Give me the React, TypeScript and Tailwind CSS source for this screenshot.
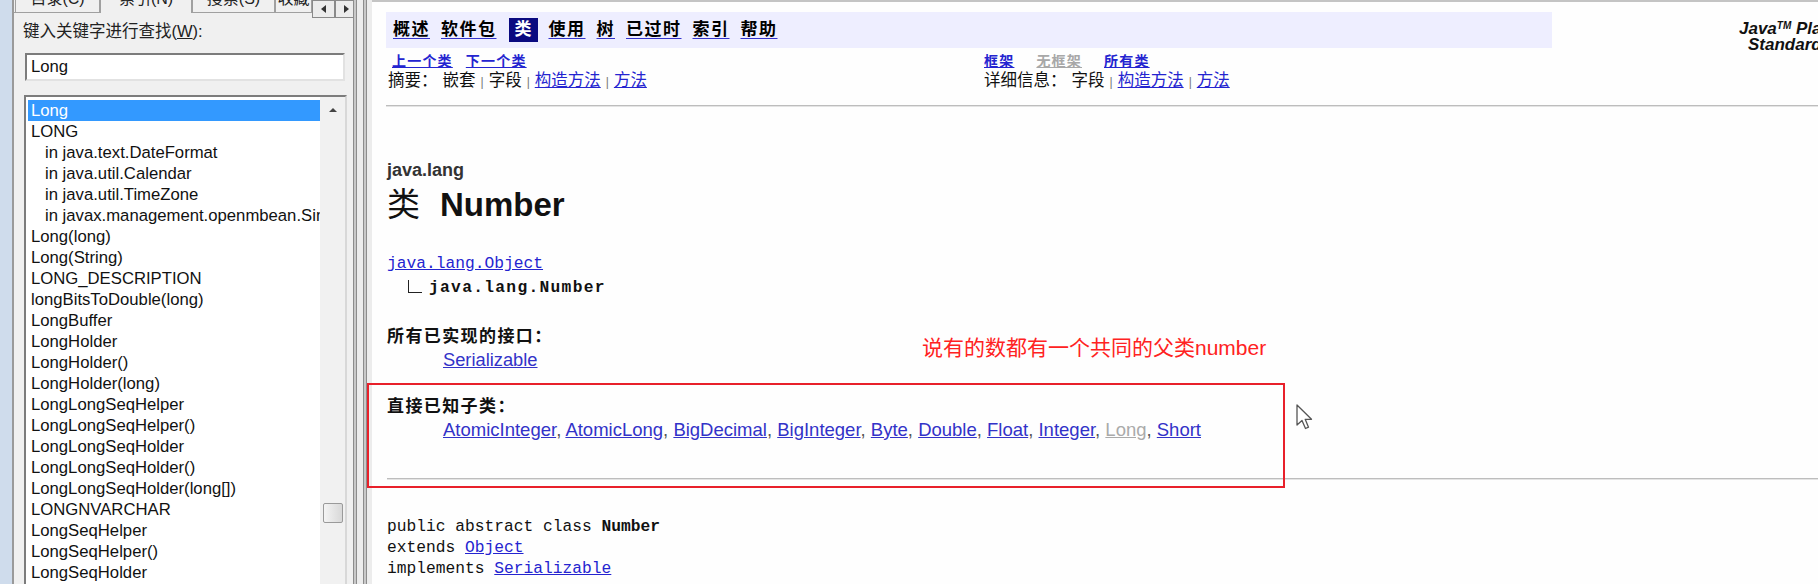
import React from 'react';

const sans = "font-['Liberation_Sans','Noto_Sans_CJK_SC',sans-serif]";
const mono = "font-['Liberation_Mono','DejaVu_Sans_Mono','Noto_Sans_CJK_SC',monospace]";

const listItems: { text: string; indent?: boolean }[] = [
  { text: 'Long' },
  { text: 'LONG' },
  { text: 'in java.text.DateFormat', indent: true },
  { text: 'in java.util.Calendar', indent: true },
  { text: 'in java.util.TimeZone', indent: true },
  { text: 'in javax.management.openmbean.SimpleType', indent: true },
  { text: 'Long(long)' },
  { text: 'Long(String)' },
  { text: 'LONG_DESCRIPTION' },
  { text: 'longBitsToDouble(long)' },
  { text: 'LongBuffer' },
  { text: 'LongHolder' },
  { text: 'LongHolder()' },
  { text: 'LongHolder(long)' },
  { text: 'LongLongSeqHelper' },
  { text: 'LongLongSeqHelper()' },
  { text: 'LongLongSeqHolder' },
  { text: 'LongLongSeqHolder()' },
  { text: 'LongLongSeqHolder(long[])' },
  { text: 'LONGNVARCHAR' },
  { text: 'LongSeqHelper' },
  { text: 'LongSeqHelper()' },
  { text: 'LongSeqHolder' },
];

const navItems = ['概述', '软件包', '类', '使用', '树', '已过时', '索引', '帮助'];

const subclasses = ['AtomicInteger', 'AtomicLong', 'BigDecimal', 'BigInteger', 'Byte', 'Double', 'Float', 'Integer', 'Long', 'Short'];

const Sep = () => <span className="mx-[5px] text-[12px] text-[#777]">|</span>;

const Tab = ({ label, width, selected }: { label: string; width: number; selected?: boolean }) => (
  <div
    style={{ width }}
    className={`h-[13px] shrink-0 overflow-hidden border-x border-[#a0a0a0] bg-[#f0f0f0] ${selected ? '' : 'border-b'}`}
  >
    <div className="-mt-[11px] text-center text-[16px] leading-[20px] text-[#222]">{label}</div>
  </div>
);

const LeftPanel = () => (
  <div className={`flex w-[341px] shrink-0 flex-col border-l-2 border-[#9a9a9a] bg-[#f0f0f0] ${sans}`}>
    {/* tab strip, mostly scrolled out of view */}
    <div className="flex h-[13px] items-start">
      <div className="h-[13px] w-[1px] shrink-0 border-b border-[#a0a0a0]" />
      <Tab label="目录(C)" width={85} />
      <Tab label="索引(N)" width={92} selected />
      <Tab label="搜索(S)" width={83} />
      <Tab label="收藏(I)" width={37} />
      <div className="flex h-[18px] w-[23px] shrink-0 items-center justify-center border border-[#8a8a8a] bg-[#ececec]">
        <div className="h-0 w-0 border-y-[4px] border-r-[5px] border-y-transparent border-r-[#333]" />
      </div>
      <div className="flex h-[18px] w-[23px] shrink-0 items-center justify-center border border-[#8a8a8a] bg-[#ececec]">
        <div className="h-0 w-0 border-y-[4px] border-l-[5px] border-y-transparent border-l-[#333]" />
      </div>
    </div>

    <div className="ml-[9px] mt-[8px] text-[16.5px] leading-[20px] text-[#222]">
      键入关键字进行查找(<span className="underline">W</span>):
    </div>

    <div className="ml-[11px] mt-[12px] flex h-[28px] w-[320px] items-center border-2 border-[#7c7c7c] border-b-[#e2e2e2] border-r-[#e2e2e2] bg-white pl-[4px] text-[16.7px] text-[#111]">
      Long
    </div>

    <div className="ml-[10px] mt-[14px] flex w-[323px] flex-1 border-2 border-[#7c7c7c] border-b-0 border-r-[#d8d8d8] bg-white">
      <div className="min-w-0 flex-1 overflow-hidden pl-[2px] pt-[3px]">
        {listItems.map((item, i) => (
          <div
            key={i}
            className={`h-[21px] whitespace-nowrap text-[16.7px] leading-[21px] ${
              i === 0 ? 'bg-[#3399ff] text-white' : 'text-[#111]'
            } ${item.indent ? 'pl-[17px]' : 'pl-[3px]'}`}
          >
            {item.text}
          </div>
        ))}
      </div>
      {/* scrollbar */}
      <div className="flex w-[25px] shrink-0 flex-col items-center bg-[#f1f1f1]">
        <div className="flex h-[25px] w-full items-center justify-center">
          <div className="h-0 w-0 border-x-[4px] border-b-[4px] border-x-transparent border-b-[#444]" />
        </div>
        <div className="mt-[381px] h-[20px] w-[20px] rounded-[2px] border border-[#9a9a9a] bg-gradient-to-r from-[#f4f4f4] to-[#d8d8d8]" />
      </div>
    </div>
  </div>
);

const Splitter = () => (
  <>
    <div className="w-[4px] shrink-0 border-x border-[#8c8c8c] bg-[#c8c8c8]" />
    <div className="w-[6px] shrink-0 bg-[#ececec]" />
    <div className="w-[4px] shrink-0 border-x border-[#8c8c8c] bg-[#c8c8c8]" />
    <div className="w-[5px] shrink-0 bg-[#ececec]" />
  </>
);

const Header = () => (
  <>
    <div className="h-[2px] bg-[#c4c4c4]" />
    <div className="mt-[10px] flex">
      <div className="ml-[14px] w-[1166px] shrink-0">
        <nav className="flex h-[36px] items-center gap-[11px] bg-[#eeeeff] pl-[7px]">
          {navItems.map((n) =>
            n === '类' ? (
              <span key={n} className="ml-[1px] flex h-[24px] items-center bg-[#0a0a80] px-[6px] text-[17px] font-bold text-white">
                {n}
              </span>
            ) : (
              <span
                key={n}
                className="text-[17px] font-bold tracking-[1.5px] text-black underline decoration-[#3333cc] underline-offset-[3px]"
              >
                {n}
              </span>
            ),
          )}
        </nav>
        <div className="mt-[3px] flex">
          <div className="w-[598px] pl-[2px]">
            <div className="flex gap-[13px] pl-[4px] text-[14px] font-bold leading-[20px] tracking-[1.2px] text-[#2424d0]">
              <span className="underline">上一个类</span>
              <span className="underline">下一个类</span>
            </div>
            <div className="text-[16.5px] leading-[19px] text-[#111]">
              摘要：<span className="ml-[5px]">嵌套</span>
              <Sep />
              字段
              <Sep />
              <span className="text-[#2424d0] underline">构造方法</span>
              <Sep />
              <span className="text-[#2424d0] underline">方法</span>
            </div>
          </div>
          <div>
            <div className="flex gap-[22px] text-[14px] font-bold leading-[20px] tracking-[1.2px]">
              <span className="text-[#2424d0] underline">框架</span>
              <span className="text-[#a8a8a8] underline">无框架</span>
              <span className="text-[#2424d0] underline">所有类</span>
            </div>
            <div className="text-[16.5px] leading-[19px] text-[#111]">
              详细信息：<span className="ml-[5px]">字段</span>
              <Sep />
              <span className="text-[#2424d0] underline">构造方法</span>
              <Sep />
              <span className="text-[#2424d0] underline">方法</span>
            </div>
          </div>
        </div>
      </div>
      <div className="ml-[187px] mt-[9px] whitespace-nowrap text-[17px] font-bold italic leading-[16px] text-[#111]">
        Java<sup className="text-[10px]">TM</sup> Platform
        <br />
        <span className="pl-[9px]">Standard Ed. 6</span>
      </div>
    </div>
    <div className="ml-[14px] mt-[13px] h-[2px] border-b border-[#e4e4e4] bg-[#bdbdbd]" />
  </>
);

const Body = () => (
  <div className="pl-[15px]">
    <div className="mt-[52px] text-[18px] font-bold leading-[22px] text-[#333]">java.lang</div>
    <div className="mt-[4px] flex items-center leading-[40px] text-[#111]">
      <span className="text-[33px] font-normal">类</span>
      <span className="ml-[20px] text-[33px] font-bold">Number</span>
    </div>
    <div className={`mt-[27px] text-[16.25px] leading-[24px] ${mono}`}>
      <span className="text-[#2424d0] underline">java.lang.Object</span>
    </div>
    <div className={`flex h-[24px] items-center text-[16.25px] leading-[24px] text-[#111] ${mono}`}>
      <span className="mb-[4px] ml-[21px] mr-[7px] inline-block h-[13px] w-[14px] border-b-[1.5px] border-l-[1.5px] border-[#222]" />
      <span className="font-bold tracking-[1.3px]">java.lang.Number</span>
    </div>
    <div className="mt-[25px] text-[17px] font-bold leading-[24px] tracking-[1.4px] text-[#111]">所有已实现的接口：</div>
    <div className="ml-[56px] text-[18.3px] leading-[22px]">
      <span className="text-[#3232c8] underline">Serializable</span>
    </div>
    <div className="mt-[24px] text-[17px] font-bold leading-[24px] tracking-[1.4px] text-[#111]">直接已知子类：</div>
    <div className="ml-[56px] whitespace-nowrap text-[18.5px] leading-[22px] text-[#555]">
      {subclasses.map((s, i) => (
        <React.Fragment key={s}>
          <span className={s === 'Long' ? 'text-[#aaaaaa] underline' : 'text-[#3232c8] underline'}>{s}</span>
          {i < subclasses.length - 1 ? ', ' : ''}
        </React.Fragment>
      ))}
    </div>
    <div className="mt-[37px] h-[2px] border-b border-[#e4e4e4] bg-[#bdbdbd]" />
    <div className={`mt-[36px] text-[16.25px] leading-[21px] text-[#111] ${mono}`}>
      <div>
        public abstract class <span className="font-bold">Number</span>
      </div>
      <div>
        extends <span className="text-[#2424d0] underline">Object</span>
      </div>
      <div>
        implements <span className="text-[#2424d0] underline">Serializable</span>
      </div>
    </div>
  </div>
);

export default function App() {
  return (
    <div className={`relative flex h-[584px] w-[1818px] overflow-hidden bg-white ${sans}`}>
      <div className="w-[12px] shrink-0 bg-[#cfdcec]" />
      <LeftPanel />
      <Splitter />
      <main className="flex min-w-0 flex-1 flex-col bg-[#fefefe]">
        <Header />
        <Body />
      </main>

      {/* annotation drawn over the page */}
      <div className="absolute left-[922px] top-[334px] whitespace-nowrap text-[21px] leading-[28px] text-[#ff2222]">
        说有的数都有一个共同的父类number
      </div>
      <div className="absolute left-[367px] top-[383px] h-[105px] w-[918px] border-2 border-[#e8202a]" />

      {/* mouse pointer */}
      <svg className="absolute left-[1296px] top-[404px]" width="18" height="27" viewBox="0 0 18 27">
        <path d="M1 1 L1 21 L6 16.5 L9.5 24.5 L12.5 23.2 L9.2 15.3 L15.5 15.3 Z" fill="#fff" stroke="#555" strokeWidth="1.3" strokeLinejoin="round" />
      </svg>
    </div>
  );
}
